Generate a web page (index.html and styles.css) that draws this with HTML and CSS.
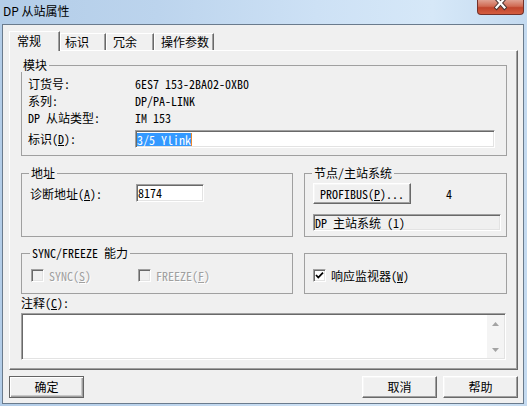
FILE: index.html
```html
<!DOCTYPE html>
<html>
  <head>
    <meta charset="utf-8">
    <title>DP 从站属性</title>
    <link rel="stylesheet" href="styles.css">
  </head>
  <body>
    <div class="window">
      <div class="titlebar">
        <span class="title">DP 从站属性</span>
        <div class="close">
          <svg width="13" height="11" viewBox="0 0 13 11">
            <path d="M2.5 -1.5 L10.5 7.5 M10.5 -1.5 L2.5 7.5" stroke="#4b3432" stroke-width="4.2" stroke-linecap="square"/>
            <path d="M2.5 -1.5 L10.5 7.5 M10.5 -1.5 L2.5 7.5" stroke="#fff" stroke-width="2.2" stroke-linecap="square"/>
          </svg>
        </div>
      </div>
      <div class="client">
        <div class="tabs">
          <div class="tab active">常规</div>
          <div class="tab">标识</div>
          <div class="tab">冗余</div>
          <div class="tab">操作参数</div>
        </div>
        <div class="panel">
          <fieldset class="group">
            <legend>模块</legend>
            <div class="info">
              <span>订货号:</span><span>6ES7 153-2BA02-0XB0</span>
              <span>系列:</span><span>DP/PA-LINK</span>
              <span>DP 从站类型:</span><span>IM 153</span>
              <span class="last">标识(<u>D</u>):</span>
              <div class="last field wide"><span class="selected">3/5 Ylink</span></div>
            </div>
          </fieldset>

          <div class="row two">
            <fieldset class="group address">
              <legend>地址</legend>
              <div class="line">
                <span class="addr-label">诊断地址(<u>A</u>):</span>
                <div class="field short">8174</div>
              </div>
            </fieldset>
            <fieldset class="group node">
              <legend>节点/主站系统</legend>
              <div class="line">
                <div class="button profibus">PROFIBUS(<u>P</u>)...</div>
                <span class="node-num">4</span>
              </div>
              <div class="readonly">DP 主站系统 (1)</div>
            </fieldset>
          </div>

          <div class="row three">
            <fieldset class="group sync">
              <legend>SYNC/FREEZE 能力</legend>
              <div class="checks">
                <div class="check disabled"><span class="box"></span><span>SYNC(<u>S</u>)</span></div>
                <div class="check disabled"><span class="box"></span><span>FREEZE(<u>F</u>)</span></div>
              </div>
            </fieldset>
            <div class="group watchdog">
              <div class="check">
                <span class="box">
                  <svg width="11" height="11" viewBox="0 0 11 11">
                    <path d="M2 5 L4.3 7.5 L9 2.6" fill="none" stroke="#000" stroke-width="1.8"/>
                  </svg>
                </span>
                <span>响应监视器(<u>W</u>)</span>
              </div>
            </div>
          </div>

          <div class="memo-label">注释(<u>C</u>):</div>
          <div class="memo">
            <div class="memo-text"></div>
            <div class="scrollbar">
              <div class="arrow">
                <svg width="7" height="4" viewBox="0 0 7 4"><path d="M0 4 L3.5 0 L7 4 Z" fill="#a3a3a3"/></svg>
              </div>
              <div class="arrow">
                <svg width="7" height="4" viewBox="0 0 7 4"><path d="M0 0 L3.5 4 L7 0 Z" fill="#a3a3a3"/></svg>
              </div>
            </div>
          </div>
        </div>
        <div class="buttons">
          <div class="button default">确定</div>
          <div class="spacer"></div>
          <div class="button">取消</div>
          <div class="button">帮助</div>
        </div>
      </div>
    </div>
  </body>
</html>
```
FILE: styles.css
```css
body {
  margin: 0;
  font-family: "Noto Sans Mono CJK SC", "Liberation Mono", "Noto Sans CJK SC", monospace;
  font-size: 12px;
  color: #000;
  background-color: #c2d8ef;
  overflow: hidden;
}
.window {
  width: 527px;
  height: 406px;
  display: flex;
  flex-direction: column;
  background: linear-gradient(90deg, #b3cde8 0%, #bcd4ed 30%, #cde1f5 60%, #d6e8f8 82%, #c4daf0 100%);
}
.titlebar {
  height: 24px;
  display: flex;
  align-items: flex-start;
}
.title {
  font-family: "Noto Sans CJK SC", sans-serif;
  font-size: 12px;
  line-height: 14px;
  margin: 4px 0 0 3px;
}
.close {
  margin-left: auto;
  margin-right: 3px;
  width: 45px;
  height: 14px;
  border: 1px solid #73312a;
  border-top: none;
  border-radius: 0 0 4px 4px;
  background: linear-gradient(#e0a192, #d06a53 45%, #c0452d 55%, #d45d40);
  display: flex;
  justify-content: center;
}
.client {
  flex: 1;
  margin: 0 3px 2px 2px;
  border: 1px solid #6a7b8d;
  background-color: #f0f0f0;
  padding: 6px 0 0 6px;
}

/* tabs */
.tabs {
  display: flex;
  align-items: flex-end;
  height: 19px;
}
.tab {
  box-sizing: border-box;
  height: 17px;
  line-height: 15px;
  padding-left: 5px;
  border: 1px solid;
  border-color: #fff #696969 transparent #fff;
  border-bottom: none;
  box-shadow: inset -1px 0 0 #a0a0a0;
}
.tab:nth-child(1) { width: 51px; padding-left: 7px; }
.tab:nth-child(2) { width: 46px; padding-left: 4px; }
.tab:nth-child(3) { width: 48px; padding-left: 6px; }
.tab:nth-child(4) { width: 60px; padding-left: 6px; }
.tab.active {
  height: 20px;
  line-height: 17px;
  margin-bottom: -1px;
  position: relative;
  z-index: 1;
  background-color: #f0f0f0;
}

/* panel */
.panel {
  box-sizing: border-box;
  width: 509px;
  height: 320px;
  border: 1px solid;
  border-color: #fff #696969 #696969 #fff;
  box-shadow: inset -1px -1px 0 #a0a0a0;
  padding: 7px 10px 0 11px;
}
.group {
  margin: 0;
  padding: 0;
  min-width: 0;
  border: 1px solid #a0a0a0;
}
legend {
  padding: 0 2px;
  margin-left: -1px;
  line-height: 14px;
}
.info {
  display: grid;
  grid-template-columns: 107px 1fr;
  grid-template-rows: 17px 17px 17px 22px;
  line-height: 17px;
  padding: 3px 0 7px 6px;
}
.info .last {
  align-self: end;
  line-height: 18px;
}
.field {
  box-sizing: border-box;
  height: 18px;
  border: 1px solid;
  border-color: #a0a0a0 #fff #fff #a0a0a0;
  box-shadow: inset 1px 1px 0 #696969, inset -1px -1px 0 #e3e3e3;
  background-color: #fff;
  padding: 0 0 0 1px;
  line-height: 16px;
}
.field.wide {
  width: 360px;
}
.field.short {
  width: 68px;
}
.selected {
  display: inline-block;
  height: 13px;
  line-height: 13px;
  margin-top: 2px;
  vertical-align: top;
  background-color: #3399ff;
  color: #fff;
  border-right: 1px solid #e8882c;
}

.row {
  display: grid;
  grid-template-columns: 272px 203px;
  column-gap: 11px;
}
.row.two {
  margin-top: 10px;
}
.row.three {
  margin-top: 9px;
  align-items: end;
}
.line {
  display: flex;
  align-items: center;
}
.address {
  padding: 4px 0 0 8px;
}
.addr-label {
  width: 106px;
}
.node {
  padding: 3px 0 5px 8px;
}
.node-num {
  margin-left: 35px;
}
.readonly {
  box-sizing: border-box;
  width: 188px;
  height: 17px;
  margin-top: 10px;
  border: 1px solid;
  border-color: #a0a0a0 #fff #fff #a0a0a0;
  box-shadow: inset 1px 1px 0 #696969, inset -1px -1px 0 #e3e3e3;
  line-height: 15px;
  padding-left: 1px;
}

/* buttons */
.button {
  box-sizing: border-box;
  width: 75px;
  height: 22px;
  border: 1px solid;
  border-color: #fff #696969 #696969 #fff;
  box-shadow: inset -1px -1px 0 #a0a0a0, inset 1px 1px 0 #f6f6f6;
  text-align: center;
  line-height: 20px;
}
.button.default {
  border-color: #646464;
  box-shadow: inset 1px 1px 0 #fff, inset -1px -1px 0 #a0a0a0, inset -2px -2px 0 #c8c8c8;
}
.button.profibus {
  width: 98px;
  height: 21px;
  line-height: 19px;
}

/* checkboxes */
.sync {
  padding: 9px 0 11px 9px;
}
.checks {
  display: grid;
  grid-template-columns: 107px auto;
}
.check {
  display: flex;
  align-items: center;
  height: 13px;
  gap: 5px;
}
.box {
  box-sizing: border-box;
  width: 13px;
  height: 13px;
  border: 1px solid;
  border-color: #a0a0a0 #fff #fff #a0a0a0;
  box-shadow: inset 1px 1px 0 #696969, inset -1px -1px 0 #e3e3e3;
  background-color: #fff;
  display: flex;
}
.check.disabled {
  color: #a0a0a0;
  text-shadow: 1px 1px 0 #fff;
}
.check.disabled .box {
  background-color: #f0f0f0;
}
.watchdog {
  padding: 15px 0 11px 8px;
}

/* memo */
.memo-label {
  margin-top: 2px;
  line-height: 14px;
}
.memo {
  box-sizing: border-box;
  width: 485px;
  height: 47px;
  margin-top: 3px;
  border: 1px solid;
  border-color: #a0a0a0 #fff #fff #a0a0a0;
  box-shadow: inset 1px 1px 0 #696969, inset -1px -1px 0 #e3e3e3;
  background-color: #fff;
  padding: 1px;
  display: flex;
}
.memo-text {
  flex: 1;
}
.scrollbar {
  width: 17px;
  background-color: #f4f4f4;
  display: flex;
  flex-direction: column;
  justify-content: space-between;
}
.arrow {
  height: 17px;
  display: flex;
  align-items: center;
  justify-content: center;
}

.buttons {
  display: flex;
  width: 509px;
  margin-top: 6px;
  gap: 6px;
}
.spacer {
  flex: 1;
}
```
